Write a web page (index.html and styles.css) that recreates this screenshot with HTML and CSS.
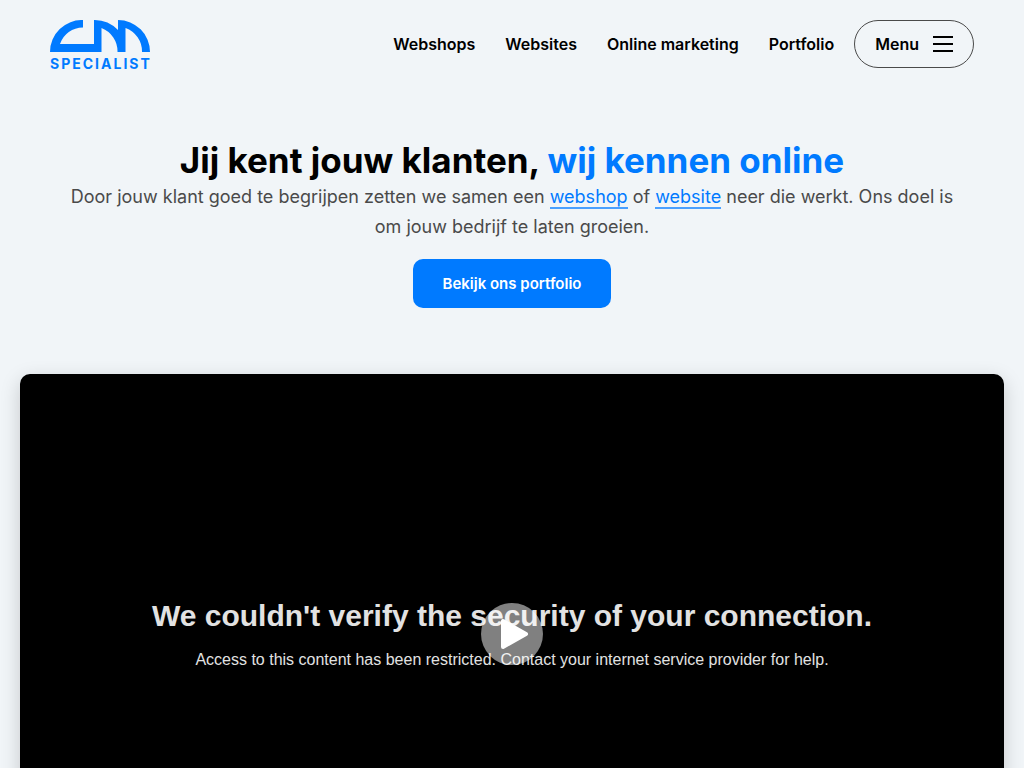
FILE: index.html
```html
<!DOCTYPE html>
<html lang="nl">
<head>
    <meta charset="UTF-8">
    <meta name="viewport" content="width=device-width, initial-scale=1.0">
    <title>CM Specialist</title>
    <link rel="stylesheet" href="styles.css">
</head>
<body>
    <header class="site-header">
        <a class="logo" href="#">
            <svg class="logo-mark" viewBox="0 0 100 32" aria-hidden="true">
                <path d="M0 32A32 32 0 0 1 33 0V7.500A24 24 0 0 0 10 24H44V0A33 33 0 0 1 68 10V0A32 32 0 0 1 100 32H92A25 25 0 0 0 75.500 8V32H67.500A25 25 0 0 0 51.500 8V32Z"/>
            </svg>
            <span class="logo-text">SPECIALIST</span>
        </a>
        <nav class="main-nav">
            <a href="#">Webshops</a>
            <a href="#">Websites</a>
            <a href="#">Online marketing</a>
            <a href="#">Portfolio</a>
        </nav>
        <button class="menu-button" type="button">
            Menu
            <span class="menu-lines"></span>
        </button>
    </header>

    <main>
        <section class="hero">
            <h1>Jij kent jouw klanten, <span>wij kennen online</span></h1>
            <p>Door jouw klant goed te begrijpen zetten we samen een <a href="#">webshop</a> of <a href="#">website</a> neer die werkt. Ons doel is om jouw bedrijf te laten groeien.</p>
            <a class="hero-button" href="#">Bekijk ons portfolio</a>
        </section>

        <section class="video">
            <h2>We couldn't verify the security of your connection.</h2>
            <p>Access to this content has been restricted. Contact your internet service provider for help.</p>
            <button class="play-button" type="button" aria-label="Video afspelen">
                <svg viewBox="0 0 62 62" aria-hidden="true">
                    <path d="M22 18V44L45 31Z"/>
                </svg>
            </button>
        </section>
    </main>
</body>
</html>
```

FILE: styles.css
```css
:root {
    --background-color: #f1f5f8;
    --primary-color: #007aff;
    --text-color: #4a4a4a;
}

* {
    box-sizing: border-box;
}

body {
    margin: 0;
    font-family: 'Inter', sans-serif;
    background-color: var(--background-color);
    color: var(--text-color);
}

.site-header {
    display: flex;
    align-items: flex-start;
    padding: 20px 50px;
}

.logo {
    display: flex;
    flex-direction: column;
    gap: 6px;
    width: 100px;
    color: var(--primary-color);
    text-decoration: none;
}

.logo-mark {
    display: block;
    width: 100%;
    fill: currentColor;
}

.logo-text {
    font-size: 14px;
    font-weight: 700;
    line-height: 12px;
    letter-spacing: 2px;
    white-space: nowrap;
}

.main-nav {
    display: flex;
    gap: 30px;
    margin-left: auto;
}

.main-nav a {
    color: #000;
    font-size: 16px;
    font-weight: 600;
    line-height: 48px;
    text-decoration: none;
}

.menu-button {
    display: flex;
    align-items: center;
    gap: 14px;
    height: 48px;
    margin-left: 20px;
    padding: 0 20px;
    border: 1px solid var(--text-color);
    border-radius: 24px;
    background: none;
    color: #000;
    font-family: inherit;
    font-size: 16px;
    font-weight: 600;
    cursor: pointer;
}

.menu-lines {
    width: 20px;
    height: 16px;
    border-top: 2px solid #000;
    border-bottom: 2px solid #000;
    background: linear-gradient(#000, #000) center / 100% 2px no-repeat;
}

.hero {
    padding: 48px 70px 66px;
    text-align: center;
}

h1 {
    margin: 0;
    color: #000;
    font-size: 35px;
    font-weight: 700;
    line-height: 44px;
}

h1 span {
    color: var(--primary-color);
}

.hero p {
    margin: 0 0 17px;
    font-size: 18px;
    line-height: 30px;
}

.hero p a {
    border-bottom: 2px solid #4aa0ff;
    color: var(--primary-color);
    text-decoration: none;
}

.hero-button {
    display: inline-block;
    padding: 0 30px;
    border-radius: 10px;
    background-color: var(--primary-color);
    color: #fff;
    font-size: 15px;
    font-weight: 600;
    line-height: 49px;
    text-decoration: none;
    vertical-align: top;
}

.video {
    position: relative;
    display: flex;
    flex-direction: column;
    align-items: center;
    justify-content: center;
    gap: 16px;
    aspect-ratio: 984 / 520;
    margin: 0 20px;
    border-radius: 10px;
    background-color: #000;
    box-shadow: 0 6px 20px rgba(0, 0, 0, 0.18);
    color: #e2e2e2;
    font-family: 'Liberation Sans', sans-serif;
    text-align: center;
}

.video h2,
.video p {
    margin: 0;
}

.video h2 {
    font-size: 30px;
    line-height: 36px;
}

.video p {
    font-size: 16px;
    line-height: 20px;
}

.play-button {
    position: absolute;
    top: 50%;
    left: 50%;
    width: 62px;
    height: 62px;
    padding: 0;
    border: none;
    border-radius: 50%;
    background-color: rgba(255, 255, 255, 0.5);
    transform: translate(-50%, -50%);
    cursor: pointer;
}

.play-button svg {
    display: block;
    fill: #fff;
    stroke: #fff;
    stroke-width: 4;
    stroke-linejoin: round;
}
```
